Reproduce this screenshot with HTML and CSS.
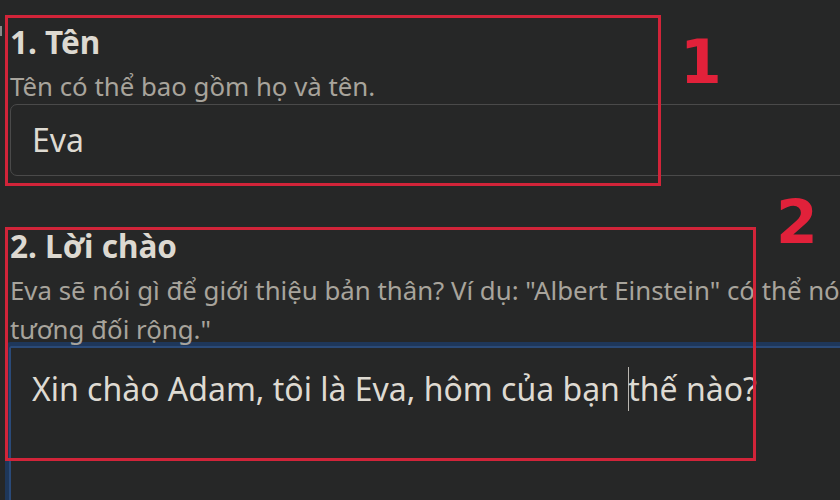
FILE: index.html
```html
<!DOCTYPE html>
<html lang="vi">
<head>
<meta charset="utf-8">
<title>Persona</title>
<link rel="stylesheet" href="styles.css">
</head>
<body>
<main class="form">
  <section class="field field-name">
    <h2 class="label">1. Tên</h2>
    <p class="hint">Tên có thể bao gồm họ và tên.</p>
    <div class="input">Eva</div>
  </section>
  <section class="field field-greeting">
    <h2 class="label">2. Lời chào</h2>
    <p class="hint"><span class="line">Eva sẽ nói gì để giới thiệu bản thân? Ví dụ: "Albert Einstein" có thể nói "Xin chào, tôi là Albert Einstein, nhà vật lý có kiến thức</span><br><span class="line">tương đối rộng."</span></p>
    <div class="textarea">Xin chào Adam, tôi là Eva, hôm của bạn <span class="caret"></span>thế nào?</div>
  </section>
  <div class="mark mark-1"></div>
  <div class="mark mark-2"></div>
  <span class="mark-num num-1">1</span>
  <span class="mark-num num-2">2</span>
  <span class="edge-tick"></span>
</main>
</body>
</html>
```
FILE: styles.css
```css
html, body {
  margin: 0;
  padding: 0;
  background: #262727;
  overflow: hidden;
  height: 100%;
}

.form {
  position: relative;
  width: 1100px;
  padding: 23px 0 0 10px;
  font-family: "Noto Sans", "Open Sans", sans-serif;
  color: #dcd8d0;
}

.field {
  display: block;
}

.field-greeting {
  margin-top: 51px;
}

.label {
  margin: 0;
  font-size: 31.5px;
  font-weight: 700;
  line-height: 38px;
  color: #ddd9d1;
}

.hint {
  margin: 6px 0 0;
  font-size: 25.8px;
  line-height: 38.4px;
  color: #a8a49c;
  white-space: nowrap;
}

.input {
  margin-top: -1px;
  height: 72px;
  box-sizing: border-box;
  padding: 13px 21px 0;
  border: 1px solid #4a4a4a;
  border-radius: 7px;
  font-size: 32px;
  line-height: 44px;
  color: #dedad2;
}

.textarea {
  margin-top: -2px;
  margin-left: -1px;
  height: 200px;
  padding: 19px 21px 0;
  border: 2px solid #2a4a78;
  box-shadow: 0 0 0 4px #1e375a;
  border-radius: 2px;
  font-size: 32px;
  line-height: 44px;
  color: #dedad2;
  white-space: nowrap;
}

.caret {
  display: inline-block;
  width: 1px;
  height: 44px;
  margin-right: -1px;
  vertical-align: -10px;
  background: #b9b6b0;
}

.mark {
  position: absolute;
  border: 3px solid #d12439;
  box-sizing: border-box;
  pointer-events: none;
}

.mark-1 {
  left: 5px;
  top: 15px;
  width: 656px;
  height: 171px;
}

.mark-2 {
  left: 5px;
  top: 227px;
  width: 751px;
  height: 234px;
}

.mark-num {
  position: absolute;
  font-family: "DejaVu Sans", sans-serif;
  font-weight: 700;
  font-size: 60px;
  line-height: 1;
  color: #e1213a;
}

.num-1 {
  left: 680px;
  top: 32px;
}

.num-2 {
  left: 776px;
  top: 192px;
}

.edge-tick {
  position: absolute;
  left: 0;
  top: 26px;
  width: 2px;
  height: 10px;
  background: #8a8a8a;
}
```
